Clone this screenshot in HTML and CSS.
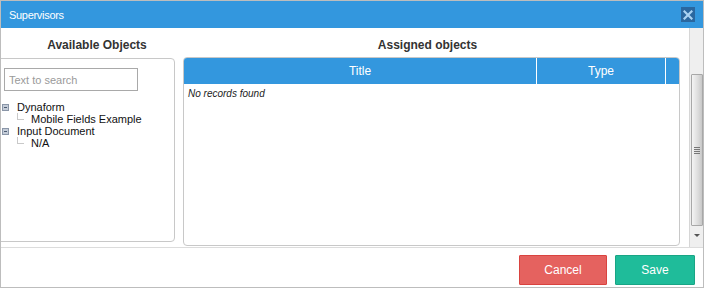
FILE: index.html
```html
<!DOCTYPE html>
<html lang="en">
<head>
  <meta charset="UTF-8">
  <title>Supervisors</title>
  <link rel="stylesheet" href="styles.css">
</head>
<body>
  <div class="dialog">
    <div class="titlebar">
      <span class="title">Supervisors</span>
      <span class="close">
        <svg width="10" height="10" viewBox="0 0 10 10"><path d="M1.5 1.5 L8.5 8.5 M8.5 1.5 L1.5 8.5" stroke="#a9d2f2" stroke-width="2.2" stroke-linecap="square"/></svg>
      </span>
    </div>
    <div class="body">
      <div class="content">
        <div class="available">
          <h3 class="heading heading-left">Available Objects</h3>
          <div class="panel left-panel">
            <input type="text" class="search" placeholder="Text to search">
            <ul class="tree">
              <li class="node"><span class="toggle"></span>Dynaform</li>
              <li class="leaf"><span class="elbow"></span>Mobile Fields Example</li>
              <li class="node"><span class="toggle"></span>Input Document</li>
              <li class="leaf"><span class="elbow"></span>N/A</li>
            </ul>
          </div>
        </div>
        <div class="assigned">
          <h3 class="heading heading-right">Assigned objects</h3>
          <div class="panel grid">
            <div class="grid-head">
              <div class="col col-title">Title</div>
              <div class="col col-type">Type</div>
              <div class="col col-end"></div>
            </div>
            <div class="empty">No records found</div>
          </div>
        </div>
      </div>
      <div class="scrollbar">
        <div class="thumb"><span class="grip"></span></div>
        <div class="arrow"></div>
      </div>
    </div>
    <div class="footer">
      <button class="btn btn-cancel">Cancel</button>
      <button class="btn btn-save">Save</button>
    </div>
  </div>
</body>
</html>
```

FILE: styles.css
```css
html, body {
  margin: 0;
  padding: 0;
  background-color: #fff;
  font-family: "Liberation Sans", Arial, sans-serif;
}

.dialog {
  width: 704px;
  height: 288px;
  box-sizing: border-box;
  border: 1px solid #bdbdbd;
  display: flex;
  flex-direction: column;
  overflow: hidden;
}

.titlebar {
  height: 27px;
  background-color: #3397de;
  display: flex;
  align-items: center;
  justify-content: space-between;
  padding: 0 8px 0 8px;
  flex-shrink: 0;
}

.title {
  color: #fff;
  font-size: 11px;
  letter-spacing: -0.3px;
}

.close {
  width: 14px;
  height: 15px;
  background-color: #2a679f;
  display: flex;
  align-items: center;
  justify-content: center;
}

.body {
  flex: 1;
  display: flex;
  min-height: 0;
}

.content {
  flex: 1;
  display: flex;
  gap: 8px;
  padding-right: 9px;
}

.available {
  width: 174px;
  display: flex;
  flex-direction: column;
}

.assigned {
  flex: 1;
  display: flex;
  flex-direction: column;
}

.heading {
  margin: 0;
  height: 30px;
  line-height: 34px;
  text-align: center;
  font-size: 12px;
  font-weight: bold;
  color: #333;
}

.heading-left {
  padding-left: 18px;
}

.heading-right {
  padding-right: 8px;
}

.panel {
  border: 1px solid #c8c8c8;
  border-radius: 4px;
  background-color: #fff;
}

.left-panel {
  height: 184px;
  margin-left: -10px;
  padding: 9px 0 0 12px;
  box-sizing: border-box;
}

.search {
  display: block;
  width: 134px;
  height: 23px;
  box-sizing: border-box;
  border: 1px solid #a9a9a9;
  padding: 0 4px;
  font-family: "Liberation Sans", Arial, sans-serif;
  font-size: 11px;
  color: #333;
  outline: none;
}

.search::placeholder {
  color: #9a9a9a;
}

.tree {
  list-style: none;
  margin: 10px 0 0 -4px;
  padding: 0;
  font-size: 11px;
  color: #111;
}

.tree li {
  height: 12px;
  line-height: 12px;
  display: flex;
  align-items: center;
}

.node {
  padding-left: 2px;
}

.leaf {
  padding-left: 17px;
}

.toggle {
  width: 5px;
  height: 5px;
  border: 1px solid #8a96a8;
  background-color: #c4ccd8;
  margin-right: 8px;
  position: relative;
}

.toggle::after {
  content: "";
  position: absolute;
  left: 1px;
  top: 2px;
  width: 3px;
  height: 1px;
  background-color: #4b5a70;
}

.elbow {
  width: 6px;
  height: 6px;
  border-left: 1px solid #c9c9c9;
  border-bottom: 1px solid #c9c9c9;
  margin: -6px 7px 0 0;
}

.grid {
  height: 187px;
  margin-top: -1px;
  overflow: hidden;
}

.grid-head {
  height: 26px;
  background-color: #3397de;
  display: flex;
  color: #fff;
  font-size: 12px;
}

.col {
  display: flex;
  align-items: center;
  justify-content: center;
  border-right: 1px solid #fff;
}

.col-title {
  width: 352px;
}

.col-type {
  width: 128px;
}

.col-end {
  flex: 1;
  border-right: none;
}

.empty {
  padding: 4px 0 0 4px;
  font-size: 10px;
  font-style: italic;
  color: #222;
}

.scrollbar {
  width: 14px;
  background-color: #efefef;
  border-left: 1px solid #d6d6d6;
  display: flex;
  flex-direction: column;
  align-items: center;
  padding-top: 46px;
  box-sizing: border-box;
}

.thumb {
  width: 12px;
  height: 152px;
  box-sizing: border-box;
  border: 1px solid #a8a8a8;
  border-radius: 1px;
  background: linear-gradient(to right, #f4f4f4, #dcdcdc 60%, #c8c8c8);
  display: flex;
  align-items: center;
  justify-content: center;
}

.grip {
  width: 6px;
  height: 7px;
  background: repeating-linear-gradient(to bottom, #777 0, #777 1px, transparent 1px, transparent 2px);
}

.arrow {
  margin-top: 8px;
  width: 0;
  height: 0;
  border-left: 3px solid transparent;
  border-right: 3px solid transparent;
  border-top: 3px solid #555;
}

.footer {
  height: 40px;
  border-top: 1px solid #dcdcdc;
  display: flex;
  justify-content: flex-end;
  align-items: flex-start;
  gap: 8px;
  padding: 7px 8px 0 0;
  box-sizing: border-box;
  flex-shrink: 0;
}

.btn {
  height: 30px;
  box-sizing: border-box;
  color: #fff;
  font-family: "Liberation Sans", Arial, sans-serif;
  font-size: 12px;
  border-radius: 1px;
  cursor: pointer;
}

.btn-cancel {
  width: 88px;
  background-color: #e5625f;
  border: 1px solid #d9433f;
}

.btn-save {
  width: 80px;
  background-color: #1fbc9a;
  border: 1px solid #19a585;
}
```
